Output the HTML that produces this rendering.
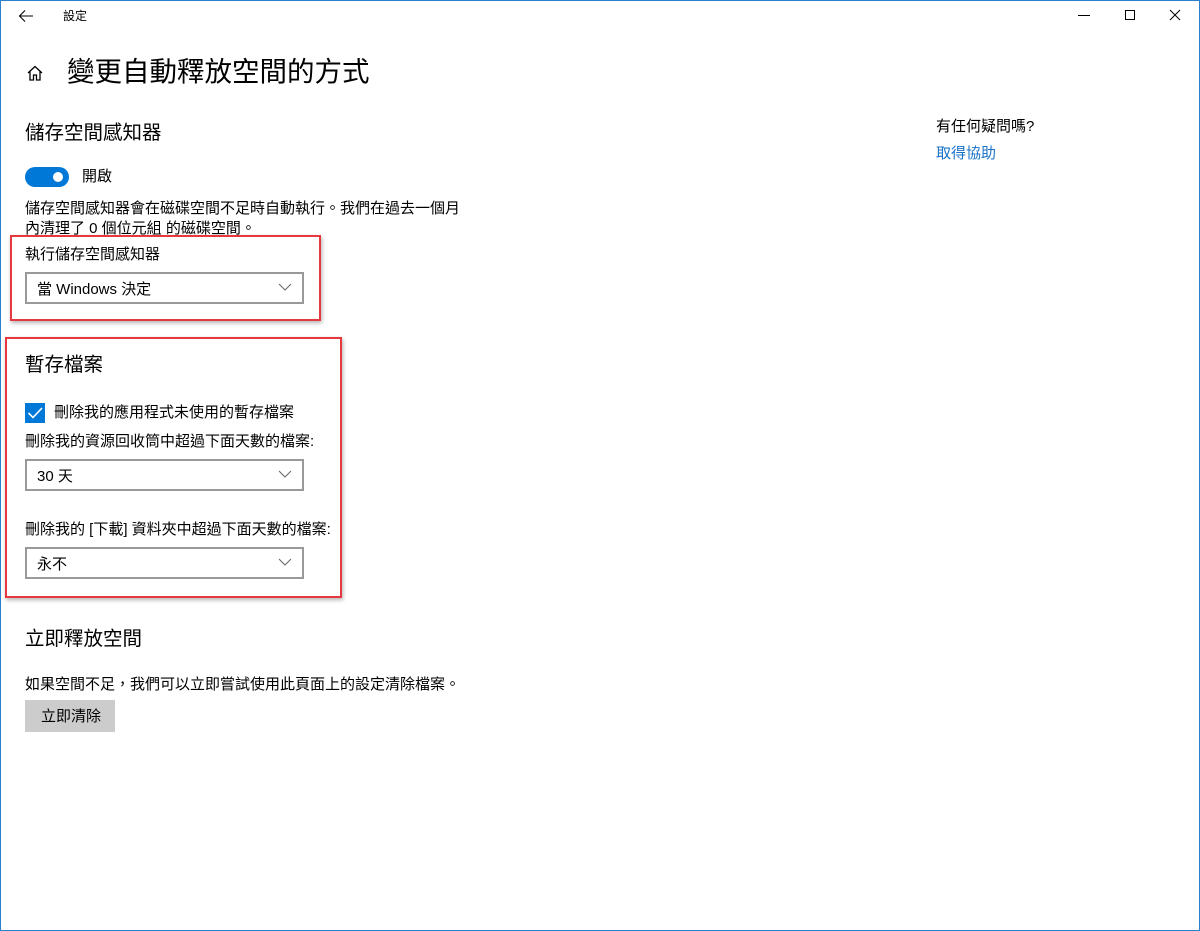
<!DOCTYPE html>
<html><head><meta charset="utf-8"><style>
*{margin:0;padding:0;box-sizing:border-box}
html,body{width:1200px;height:931px;overflow:hidden;background:#fff}
body{font-family:"Liberation Sans","Noto Sans CJK TC",sans-serif;color:#000;position:relative}
.frame{position:absolute;left:0;top:0;width:1200px;height:931px;border:1px solid #2b7fd0;border-top:none}
.a{position:absolute;white-space:nowrap;line-height:1}
.dd{position:absolute;left:25px;width:279px;height:32px;border:2px solid #999;background:#fff}
.dd span{position:absolute;left:10px;top:4px;font-size:15px}
.dd svg{position:absolute;right:10px;top:9px}
.red{position:absolute;border:2px solid #e5393f;box-shadow:1px 2px 4px rgba(0,0,0,.3)}
</style></head><body>
<div class="frame"></div>
<div class="frame" style="border:none;border-top:1px solid #2b7fd0;height:1px"></div>
<svg class="a" style="left:18px;top:9px" width="16" height="14" viewBox="0 0 16 14"><path d="M15 7H2M7 1.5L1.5 7L7 12.5" stroke="#000" stroke-width="1.1" fill="none"/></svg>
<div class="a" style="left:63px;top:10px;font-size:12px">設定</div>
<div class="a" style="left:1078px;top:15px;width:12px;height:1px;background:#000"></div>
<div class="a" style="left:1125px;top:10px;width:10px;height:10px;border:1px solid #000"></div>
<svg class="a" style="left:1169px;top:9px" width="12" height="12"><path d="M1 1L11 11M11 1L1 11" stroke="#000" stroke-width="1"/></svg>
<svg class="a" style="left:26px;top:64px" width="18" height="18" viewBox="0 0 18 18"><path d="M2 9L9 2.5L16 9M4 7.5V16H7.5V11H10.5V16H14V7.5" stroke="#000" stroke-width="1.3" fill="none"/></svg>
<div class="a" style="left:67px;top:58px;font-size:27.5px">變更自動釋放空間的方式</div>
<div class="a" style="left:25px;top:124px;font-size:19.5px">儲存空間感知器</div>
<div class="a" style="left:25px;top:167px;width:44px;height:20px;border-radius:10px;background:#0078d7"></div>
<div class="a" style="left:53px;top:172px;width:10px;height:10px;border-radius:5px;background:#fff"></div>
<div class="a" style="left:82px;top:169px;font-size:15px">開啟</div>
<div class="a" style="left:25px;top:199px;font-size:15px;line-height:20px">儲存空間感知器會在磁碟空間不足時自動執行。我們在過去一個月<br>內清理了 0 個位元組 的磁碟空間。</div>
<div class="red" style="left:10px;top:235px;width:311px;height:86px"></div>
<div class="a" style="left:25px;top:247px;font-size:15px">執行儲存空間感知器</div>
<div class="dd" style="top:272px"><span>當 Windows 決定</span><svg width="14" height="8"><path d="M1 1L7 7L13 1" stroke="#666" fill="none"/></svg></div>
<div class="red" style="left:5px;top:337px;width:337px;height:261px"></div>
<div class="a" style="left:25px;top:356px;font-size:19.5px">暫存檔案</div>
<div class="a" style="left:25px;top:403px;width:20px;height:20px;background:#0078d7"></div>
<svg class="a" style="left:27px;top:406px" width="16" height="14"><path d="M1.5 7L6 11.5L15 2" stroke="#fff" stroke-width="1.6" fill="none"/></svg>
<div class="a" style="left:54px;top:405px;font-size:15px">刪除我的應用程式未使用的暫存檔案</div>
<div class="a" style="left:25px;top:434px;font-size:15px">刪除我的資源回收筒中超過下面天數的檔案:</div>
<div class="dd" style="top:459px"><span>30 天</span><svg width="14" height="8"><path d="M1 1L7 7L13 1" stroke="#666" fill="none"/></svg></div>
<div class="a" style="left:25px;top:522px;font-size:15px">刪除我的 [下載] 資料夾中超過下面天數的檔案:</div>
<div class="dd" style="top:547px"><span>永不</span><svg width="14" height="8"><path d="M1 1L7 7L13 1" stroke="#666" fill="none"/></svg></div>
<div class="a" style="left:25px;top:630px;font-size:19.5px">立即釋放空間</div>
<div class="a" style="left:25px;top:677px;font-size:15px">如果空間不足，我們可以立即嘗試使用此頁面上的設定清除檔案。</div>
<div class="a" style="left:25px;top:700px;width:90px;height:32px;background:#ccc"></div>
<div class="a" style="left:41px;top:709px;font-size:15px">立即清除</div>
<div class="a" style="left:936px;top:119px;font-size:15px">有任何疑問嗎?</div>
<div class="a" style="left:936px;top:146px;font-size:15px;color:#1a73c8">取得協助</div>
</body></html>
